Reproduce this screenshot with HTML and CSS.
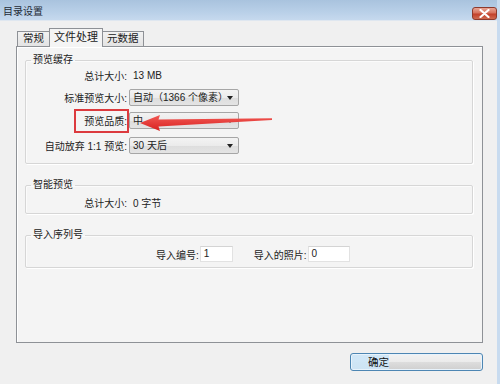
FILE: index.html
```html
<!DOCTYPE html>
<html>
<head>
<meta charset="utf-8">
<title>目录设置</title>
<link rel="stylesheet" href="styles.css">
</head>
<body>
<div class="window">
  <div class="titlebar">
    <span class="title">目录设置</span>
    <span class="close">
      <svg width="11" height="9" viewBox="0 0 11 9"><path d="M1.5 1 L9.5 8 M9.5 1 L1.5 8" stroke="#fff" stroke-width="2.2" stroke-linecap="round"/></svg>
    </span>
  </div>
  <div class="body">
    <div class="tabs">
      <div class="tab first">常规</div>
      <div class="tab active">文件处理</div>
      <div class="tab">元数据</div>
    </div>
    <div class="panel">
      <fieldset class="group g1">
        <legend>预览缓存</legend>
        <div class="row r-first"><span class="label">总计大小:</span><span class="value">13 MB</span></div>
        <div class="row"><span class="label">标准预览大小:</span><div class="combo w109">自动（1366 个像素）<span class="arrow"></span></div></div>
        <div class="row"><span class="label">预览品质:</span><div class="combo w109">中<span class="arrow"></span></div></div>
        <div class="row"><span class="label">自动放弃 1:1 预览:</span><div class="combo w109">30 天后<span class="arrow"></span></div></div>
      </fieldset>
      <fieldset class="group g2">
        <legend>智能预览</legend>
        <div class="row r-first"><span class="label">总计大小:</span><span class="value">0 字节</span></div>
      </fieldset>
      <fieldset class="group g3">
        <legend>导入序列号</legend>
        <div class="irow">
          <span class="ilabel">导入编号:</span><span class="input w33">1</span>
          <span class="ilabel second">导入的照片:</span><span class="input w42">0</span>
        </div>
      </fieldset>
    </div>
    <div class="footer">
      <div class="ok"><span class="ok-text">确定</span></div>
    </div>
  </div>
  <div class="mark-box"></div>
  <svg class="mark-arrow" width="140" height="26" viewBox="0 0 140 26">
    <defs>
      <linearGradient id="ar" x1="0" y1="0" x2="0" y2="1">
        <stop offset="0" stop-color="#f25a55"/>
        <stop offset="1" stop-color="#d8201f"/>
      </linearGradient>
    </defs>
    <path d="M3 13 L23 5 L21.5 9.5 L135 8.2 L135 10 L21.5 16.5 L23 21 Z" fill="url(#ar)"/>
  </svg>
</div>
</body>
</html>
```

FILE: styles.css
```css
* { box-sizing: border-box; }
html, body { margin: 0; padding: 0; }
body {
  width: 500px;
  height: 384px;
  overflow: hidden;
  background: #f0f0f0;
  font-family: "Liberation Sans", "Noto Sans CJK SC", sans-serif;
  font-size: 10px;
  color: #222;
}
.window {
  position: relative;
  width: 500px;
  height: 384px;
  border-right: 3px solid #c8dbef;
  background: #f0f0f0;
}
.titlebar {
  height: 21px;
  display: flex;
  align-items: flex-start;
  justify-content: space-between;
  background: linear-gradient(to bottom, #a9c3de 0%, #b9d0e8 60%, #c6d9ee 100%);
  border-bottom: 1px solid #dfe7f0;
}
.title {
  margin: 5px 0 0 3px;
  line-height: 14px;
  font-size: 10px;
  color: #1e2a36;
}
.close {
  margin: 7px 0 0 0;
  width: 25px;
  height: 13px;
  border: 1px solid #8d3a2c;
  border-radius: 3px;
  background: linear-gradient(to bottom, #e9a595 0%, #d7725d 45%, #c2402a 55%, #cf6a50 100%);
  display: flex;
  align-items: center;
  justify-content: center;
}
.close svg { display: block; }

.body {
  padding: 7px 0 0 16px;
}
.tabs {
  display: flex;
  align-items: flex-end;
  height: 18px;
  padding-left: 1px;
}
.tab {
  height: 15px;
  line-height: 13px;
  padding: 0 4px;
  border: 1px solid #8e9196;
  border-bottom: none;
  background: linear-gradient(to bottom, #f2f2f2, #e3e3e3);
  font-size: 10.5px;
  color: #222;
}
.tab.first { padding: 0 5px 0 5px; }
.tab.active {
  height: 19px;
  margin: 0 -1px -1px;
  line-height: 16px;
  padding: 0 4px;
  background: #f4f4f4;
  position: relative;
  z-index: 1;
  font-size: 11px;
}
.panel {
  width: 467px;
  height: 297px;
  border: 1px solid #8e9196;
  background: #f4f4f4;
  box-shadow: inset 1px 1px 0 #ffffff;
  padding: 6px 9px 0 8px;
}
.group {
  margin: 0;
  padding: 0;
  border: 1px solid #d6d6d6;
  border-radius: 2px;
  box-shadow: inset 1px 1px 0 #fbfbfb, 1px 1px 0 #ffffff;
}
.group legend {
  padding: 0 2px;
  margin-left: 5px;
  line-height: 14px;
  font-size: 10px;
}
.g1 { padding-bottom: 9px; }
.g2 { margin-top: 14px; padding-bottom: 3px; }
.g3 { margin-top: 14px; padding-bottom: 5px; }

.row {
  display: flex;
  align-items: center;
  height: 17px;
  margin-top: 6px;
}
.row.r-first { margin-top: 0; height: 16px; }
.g1 .row:last-child { margin-top: 8px; }
.g2 .row.r-first { margin-top: 2px; }
.label {
  width: 101px;
  text-align: right;
  white-space: nowrap;
}
.value {
  margin-left: 6px;
}
.combo {
  position: relative;
  margin-left: 2px;
  height: 17px;
  line-height: 15px;
  padding-left: 3px;
  border: 1px solid #a6a6a6;
  border-radius: 2px;
  background: linear-gradient(to bottom, #f3f3f3 0%, #ebebeb 50%, #dddddd 51%, #e4e4e4 100%);
  white-space: nowrap;
}
.w109 { width: 110px; }
.arrow {
  position: absolute;
  right: 5px;
  top: 6px;
  width: 0;
  height: 0;
  border-left: 3px solid transparent;
  border-right: 3px solid transparent;
  border-top: 4px solid #222;
}
.irow {
  display: flex;
  align-items: center;
  margin-top: 4px;
  height: 16px;
  padding-left: 130px;
}
.ilabel { white-space: nowrap; }
.ilabel.second { margin-left: 21px; }
.input {
  height: 16px;
  line-height: 14px;
  padding-left: 3px;
  margin-left: 1px;
  background: #ffffff;
  border: 1px solid #e2e2e2;
  border-top-color: #d4d4d4;
}
.w33 { width: 33px; }
.w42 { width: 42px; }

.footer {
  display: flex;
  padding: 10px 0 0 334px;
}
.ok {
  width: 133px;
  height: 18px;
  border: 1px solid #4d86b3;
  border-radius: 3px;
  background:
    linear-gradient(to right, rgba(205,230,248,0.9) 0, rgba(205,230,248,0.9) 38px, rgba(0,0,0,0) 38px),
    linear-gradient(to bottom, #f2f2f2 0%, #ebebeb 50%, #dddddd 51%, #cfcfcf 100%);
  box-shadow: inset 0 0 0 1px #e8f3fc;
  display: flex;
  align-items: center;
}
.ok-text {
  padding-left: 17px;
  font-size: 10.5px;
  line-height: 14px;
  color: #111;
}

.mark-box {
  position: absolute;
  left: 74px;
  top: 109px;
  width: 55px;
  height: 24px;
  border: 2px solid #dc3a3e;
}
.mark-arrow {
  position: absolute;
  left: 137px;
  top: 110px;
}
```
